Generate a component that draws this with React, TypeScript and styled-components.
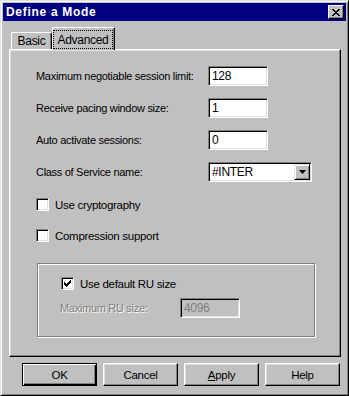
import React from "react";
import styled, { createGlobalStyle } from "styled-components";

const Global = createGlobalStyle`
  html, body { margin: 0; padding: 0; background: #c0c0c0; }
  * { box-sizing: border-box; }
  body {
    font-family: "Liberation Sans", Arial, sans-serif;
    font-size: 11px;
    letter-spacing: -0.3px;
    color: #000;
  }
`;

const Window = styled.div`
  width: 349px;
  height: 396px;
  background: #c0c0c0;
  border: 1px solid;
  border-color: #dfdfdf #000 #000 #dfdfdf;
  box-shadow: inset 1px 1px #fff, inset -1px -1px #808080;
  padding: 2px;
  display: flex;
  flex-direction: column;
`;

const TitleBar = styled.div`
  height: 18px;
  background: #000080;
  display: flex;
  align-items: center;
  justify-content: space-between;
  padding: 0 2px 0 3px;
`;

const TitleText = styled.span`
  color: #fff;
  font-weight: bold;
  font-size: 12px;
  letter-spacing: 0.7px;
`;

const CloseButton = styled.div`
  width: 16px;
  height: 14px;
  background: #c0c0c0;
  border: 1px solid;
  border-color: #fff #000 #000 #fff;
  box-shadow: inset -1px -1px #808080;
  display: flex;
  align-items: center;
  justify-content: center;
`;

const Body = styled.div`
  display: flex;
  flex-direction: column;
  padding: 6px 0 0 6px;
`;

const TabStrip = styled.div`
  height: 22px;
  display: flex;
  align-items: flex-end;
  padding-left: 2px;
`;

const Tab = styled.div<{ $active?: boolean }>`
  position: relative;
  z-index: ${(p) => (p.$active ? 1 : 0)};
  height: ${(p) => (p.$active ? "23px" : "17px")};
  margin-bottom: ${(p) => (p.$active ? "-1px" : "0")};
  width: ${(p) => (p.$active ? "63px" : "41px")};
  background: #c0c0c0;
  border-top: 1px solid #fff;
  border-left: 1px solid #fff;
  border-right: 1px solid #000;
  border-radius: 2px 2px 0 0;
  box-shadow: inset -1px 0 #808080;
  display: flex;
  align-items: ${(p) => (p.$active ? "flex-start" : "center")};
  justify-content: center;
  padding-top: ${(p) => (p.$active ? "3px" : "0")};
  font-size: 12px;
`;

const FocusLabel = styled.span`
  width: 58px;
  height: 17px;
  outline: 1px dotted #000;
  display: flex;
  align-items: center;
  justify-content: center;
  margin-right: 1px;
`;

const Panel = styled.div`
  width: 332px;
  height: 308px;
  border: 1px solid;
  border-color: #fff #000 #000 #fff;
  box-shadow: inset -1px -1px #808080, inset 1px 1px #dfdfdf;
  padding: 16px 0 0 26px;
  display: flex;
  flex-direction: column;
`;

const FieldRow = styled.div`
  display: flex;
  align-items: center;
  height: 20px;
  margin-bottom: 12px;
`;

const Label = styled.span<{ $width: number; $disabled?: boolean }>`
  width: ${(p) => p.$width}px;
  color: ${(p) => (p.$disabled ? "#808080" : "#000")};
  text-shadow: ${(p) => (p.$disabled ? "1px 1px #fff" : "none")};
  white-space: nowrap;
`;

const Field = styled.div<{ $width: number; $disabled?: boolean }>`
  width: ${(p) => p.$width}px;
  height: 20px;
  background: ${(p) => (p.$disabled ? "#c0c0c0" : "#fff")};
  color: ${(p) => (p.$disabled ? "#808080" : "#000")};
  border: 1px solid;
  border-color: #808080 #fff #fff #808080;
  box-shadow: inset 1px 1px #000, inset -1px -1px #dfdfdf;
  display: flex;
  align-items: center;
  padding-left: 3px;
  font-size: 12px;
`;

const ComboText = styled.span`
  flex: 1;
`;

const DropButton = styled.div`
  width: 16px;
  height: 16px;
  margin-right: 1px;
  background: #c0c0c0;
  border: 1px solid;
  border-color: #dfdfdf #000 #000 #dfdfdf;
  box-shadow: inset 1px 1px #fff, inset -1px -1px #808080;
  display: flex;
  align-items: center;
  justify-content: center;
`;

const CheckRow = styled.div<{ $top: number }>`
  display: flex;
  align-items: center;
  height: 13px;
  margin-top: ${(p) => p.$top}px;
  gap: 6px;
`;

const Box = styled.div`
  width: 13px;
  height: 13px;
  background: #fff;
  border: 1px solid;
  border-color: #808080 #fff #fff #808080;
  box-shadow: inset 1px 1px #000, inset -1px -1px #dfdfdf;
  display: flex;
  align-items: center;
  justify-content: center;
`;

const CheckText = styled.span`
  font-size: 11.5px;
`;

const GroupBox = styled.div`
  margin-top: 21px;
  margin-left: 1px;
  width: 278px;
  height: 74px;
  border: 1px solid #808080;
  box-shadow: 1px 1px #fff, inset 1px 1px #fff;
  padding: 13px 0 0 23px;
  display: flex;
  flex-direction: column;
`;

const SubRow = styled.div`
  display: flex;
  align-items: center;
  height: 20px;
  margin-top: 8px;
  margin-left: -1px;
`;

const ButtonRow = styled.div`
  display: flex;
  gap: 6px;
  margin-top: 6px;
  margin-left: 13px;
`;

const Button = styled.div<{ $default?: boolean }>`
  width: 75px;
  height: 23px;
  background: #c0c0c0;
  border: 1px solid;
  border-color: ${(p) => (p.$default ? "#000" : "#fff #000 #000 #fff")};
  box-shadow: ${(p) =>
    p.$default
      ? "inset 1px 1px #fff, inset -1px -1px #000, inset -2px -2px #808080"
      : "inset -1px -1px #808080, inset 1px 1px #dfdfdf"};
  display: flex;
  align-items: center;
  justify-content: center;
  font-size: 11.5px;
`;

const Check = () => (
  <svg width="7" height="7" viewBox="0 0 7 7">
    <path d="M0 2h1v1h1v1h1v-1h1v-1h1v-1h1v-1h1v3h-1v1h-1v1h-1v1h-1v1h-1v-1h-1v-1h-1z" fill="#000" />
  </svg>
);

export default function App() {
  return (
    <>
      <Global />
      <Window>
        <TitleBar>
          <TitleText>Define a Mode</TitleText>
          <CloseButton>
            <svg width="8" height="7" viewBox="0 0 8 7">
              <path d="M0 0h2v1h1v1h2v-1h1v-1h2v1h-1v1h-1v1h-1v1h1v1h1v1h1v1h-2v-1h-1v-1h-2v1h-1v1h-2v-1h1v-1h1v-1h1v-1h-1v-1h-1v-1h-1z" fill="#000" />
            </svg>
          </CloseButton>
        </TitleBar>
        <Body>
          <TabStrip>
            <Tab>Basic</Tab>
            <Tab $active>
              <FocusLabel>Advanced</FocusLabel>
            </Tab>
          </TabStrip>
          <Panel>
            <FieldRow>
              <Label $width={172}>Maximum negotiable session limit:</Label>
              <Field $width={60}>128</Field>
            </FieldRow>
            <FieldRow>
              <Label $width={172}>Receive pacing window size:</Label>
              <Field $width={60}>1</Field>
            </FieldRow>
            <FieldRow>
              <Label $width={172}>Auto activate sessions:</Label>
              <Field $width={60}>0</Field>
            </FieldRow>
            <FieldRow>
              <Label $width={172}>Class of Service name:</Label>
              <Field $width={104}>
                <ComboText>#INTER</ComboText>
                <DropButton>
                  <svg width="7" height="4" viewBox="0 0 7 4">
                    <path d="M0 0h7l-3.5 4z" fill="#000" />
                  </svg>
                </DropButton>
              </Field>
            </FieldRow>
            <CheckRow $top={4}>
              <Box />
              <CheckText>Use cryptography</CheckText>
            </CheckRow>
            <CheckRow $top={18}>
              <Box />
              <CheckText>Compression support</CheckText>
            </CheckRow>
            <GroupBox>
              <CheckRow $top={0}>
                <Box>
                  <Check />
                </Box>
                <CheckText>Use default RU size</CheckText>
              </CheckRow>
              <SubRow>
                <Label $width={120} $disabled>
                  Maximum RU size:
                </Label>
                <Field $width={60} $disabled>
                  4096
                </Field>
              </SubRow>
            </GroupBox>
          </Panel>
          <ButtonRow>
            <Button $default>OK</Button>
            <Button>Cancel</Button>
            <Button>
              <span>
                <u>A</u>pply
              </span>
            </Button>
            <Button>Help</Button>
          </ButtonRow>
        </Body>
      </Window>
    </>
  );
}
